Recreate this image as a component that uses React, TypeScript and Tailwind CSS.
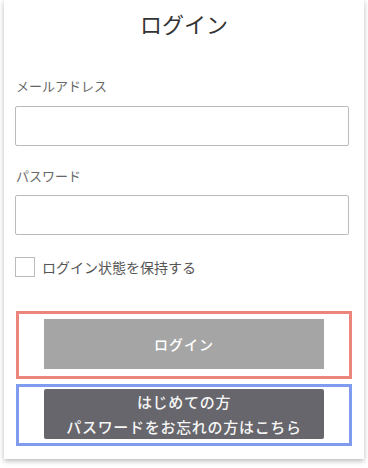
import React, { useState } from 'react';

const font = { fontFamily: '"Noto Sans CJK JP", "Noto Sans", sans-serif' };

export default function App() {
  const [keep, setKeep] = useState(false);

  return (
    <div className="w-[368px] h-[468px] bg-white overflow-hidden" style={font}>
      <div className="ml-[4px] w-[360px] h-[459px] bg-white shadow-[0_2px_5px_rgba(0,0,0,0.28)]">
        {/* Title */}
        <h1 className="pt-[7px] text-center text-[22px] leading-[33px] text-[#333]">ログイン</h1>

        {/* Form */}
        <div className="px-[11px] pt-[36px]">
          <label className="block text-[13px] leading-[20px] text-[#666] pl-[1px]">メールアドレス</label>
          <input type="email" className="mt-[10px] block w-[334px] h-[40px] border border-[#bbb] rounded-[2px] px-2 outline-none" />

          <label className="block mt-[20px] text-[13px] leading-[20px] text-[#666] pl-[1px]">パスワード</label>
          <input type="password" className="mt-[9px] block w-[334px] h-[40px] border border-[#bbb] rounded-[2px] px-2 outline-none" />

          <label className="mt-[22px] flex items-center gap-[7px] cursor-pointer">
            <span
              onClick={() => setKeep(!keep)}
              className="w-[20px] h-[20px] border border-[#bbb] bg-white"
            />
            <span className="text-[14px] leading-[20px] text-[#555]">ログイン状態を保持する</span>
          </label>
        </div>

        {/* Buttons */}
        <div className="ml-[12px] mt-[34px] w-[336px] border-[3px] border-[#ec857c] pt-[5px] pb-[7px] flex justify-center">
          <button className="w-[280px] h-[50px] bg-[#a5a5a5] text-white text-[14px] tracking-[1px] font-medium">ログイン</button>
        </div>
        <div className="ml-[12px] mt-[5px] w-[336px] border-[3px] border-[#7f9cf0] pt-[2px] pb-[4px] flex justify-center">
          <button className="w-[280px] h-[50px] bg-[#66666c] rounded-[2px] text-[#f5f5f5] text-[15px] leading-[25px] tracking-[0.7px] font-medium">
            はじめての方
            <br />
            パスワードをお忘れの方はこちら
          </button>
        </div>
      </div>
    </div>
  );
}
